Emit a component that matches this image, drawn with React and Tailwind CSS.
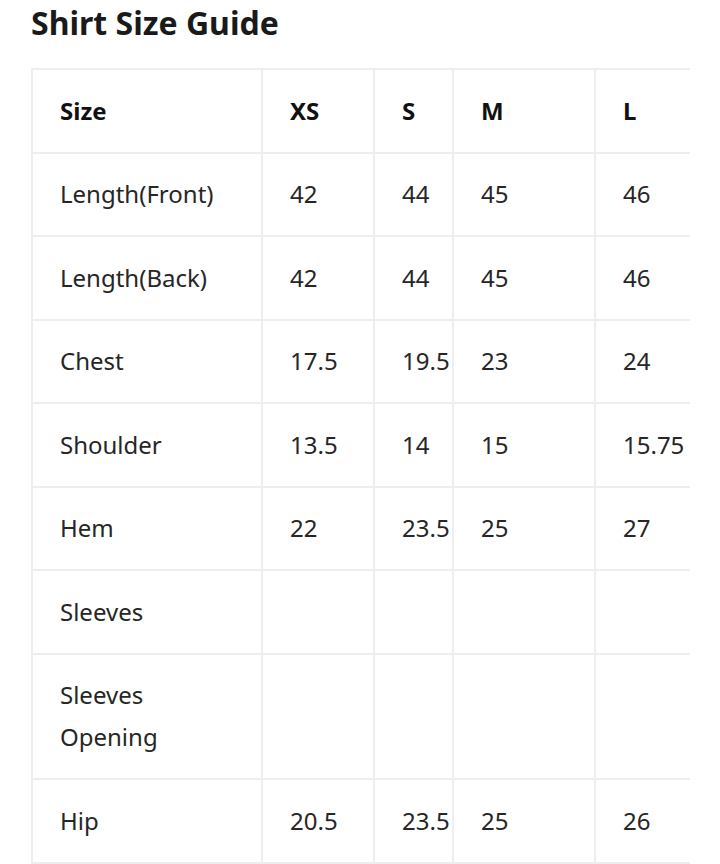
import React from "react";

const SIZES = ["XS", "S", "M", "L"];

const ROWS = [
  { label: "Length(Front)", values: ["42", "44", "45", "46"] },
  { label: "Length(Back)", values: ["42", "44", "45", "46"] },
  { label: "Chest", values: ["17.5", "19.5", "23", "24"] },
  { label: "Shoulder", values: ["13.5", "14", "15", "15.75"] },
  { label: "Hem", values: ["22", "23.5", "25", "27"] },
  { label: "Sleeves", values: ["", "", "", ""] },
  { label: "Sleeves Opening", values: ["", "", "", ""] },
  { label: "Hip", values: ["20.5", "23.5", "25", "26"] },
];

// widths for each column, border included
const COL_WIDTHS = ["w-[230px]", "w-[112px]", "w-[79px]", "w-[142px]", "w-[200px]"];

const cellBase =
  "border-r-2 border-b-2 border-[#eeeeee] pl-[27px] pr-2 py-[19.75px] align-middle text-left leading-[42px]";

export default function App() {
  return (
    <div className="min-h-screen bg-white font-['Noto_Sans',sans-serif] text-[#262626]">
      <h1 className="pl-[31px] pt-[3px] mb-[25px] text-[32px] leading-[40px] font-bold text-[#1a1a1a]">
        Shirt Size Guide
      </h1>

      <div className="ml-[31px] w-[659px] overflow-hidden">
        <table className="table-fixed w-[763px] border-separate border-spacing-0 border-l-2 border-t-2 border-[#eeeeee] text-[24px]">
          <thead>
            <tr>
              <th className={`${cellBase} ${COL_WIDTHS[0]} font-bold text-[#111]`}>Size</th>
              {SIZES.map((s, i) => (
                <th key={s} className={`${cellBase} ${COL_WIDTHS[i + 1]} font-bold text-[#111]`}>
                  {s}
                </th>
              ))}
            </tr>
          </thead>
          <tbody>
            {ROWS.map((row) => (
              <tr key={row.label}>
                <td className={`${cellBase} pr-[60px]`}>{row.label}</td>
                {row.values.map((v, i) => (
                  <td key={i} className={cellBase}>
                    {v}
                  </td>
                ))}
              </tr>
            ))}
          </tbody>
        </table>
      </div>
    </div>
  );
}
